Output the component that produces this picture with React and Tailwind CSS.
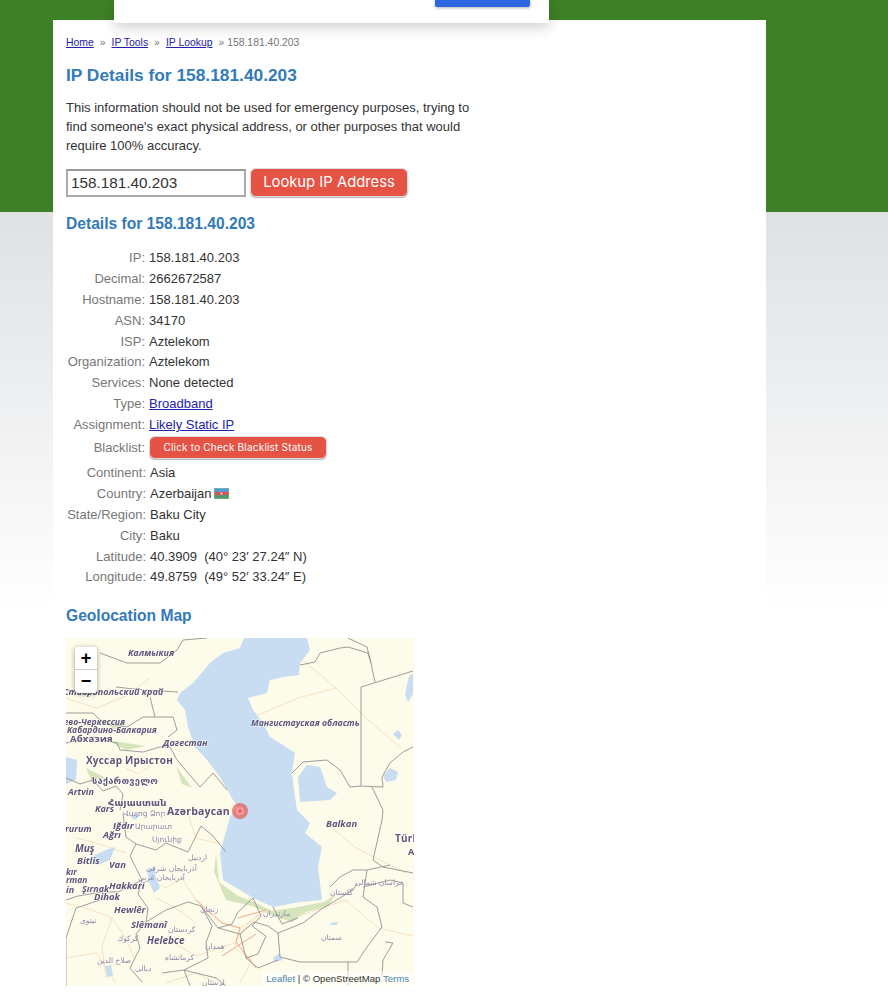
import React from 'react';

const sans = "font-['Liberation_Sans',Arial,sans-serif]";

const firstRows = [
  ['IP', '158.181.40.203'],
  ['Decimal', '2662672587'],
  ['Hostname', '158.181.40.203'],
  ['ASN', '34170'],
  ['ISP', 'Aztelekom'],
  ['Organization', 'Aztelekom'],
  ['Services', 'None detected'],
];

const geoRows = [
  ['Continent', 'Asia'],
  ['Country', 'Azerbaijan'],
  ['State/Region', 'Baku City'],
  ['City', 'Baku'],
  ['Latitude', '40.3909\u00a0\u00a0(40° 23′ 27.24″ N)'],
  ['Longitude', '49.8759\u00a0\u00a0(49° 52′ 33.24″ E)'],
];

// Map labels: text, x, y (baseline), font size
const boldItalic = [
  ['Калмыкия', 62, 18, 9],
  ['Ставропольский край', -3, 57, 9],
  ['Кабардино-Балкария', 1, 95, 8.6],
  ['Дагестан', 97, 108, 9],
  ['Artvin', 2, 157, 9],
  ['Kars', 29, 174, 9],
  ['Мангистауская область', 185, 88, 8.7],
  ['Balkan', 260, 189, 9.5],
  ['rurum', -1, 194, 9],
  ['Iğdır', 47, 191, 9.5],
  ['Ağrı', 37, 200, 9.5],
  ['Muş', 9, 214, 10],
  ['Bitlis', 11, 226, 9.5],
  ['Van', 43, 230, 9.5],
  ['kır', 0, 237, 8.5],
  ['rman', 0, 245, 8.5],
  ['in', 0, 255, 9],
  ['Şırnak', 16, 254, 9],
  ['Hakkari', 43, 251, 9.5],
  ['Dihok', 28, 262, 9.5],
  ['Hewlêr', 48, 275, 9.5],
  ['Slêmanî', 65, 290, 9.5],
  ['Helebce', 81, 306, 10],
];

const boldUpright = [
  ['Абхазия', 4, 104, 9.5],
  ['Хуссар Ирыстон', 20, 126, 10],
  ['საქართველო', 26, 146, 9.3],
  ['Հայաստան', 42, 168, 9.5],
  ['Azərbaycan', 101, 177, 10.5],
  ['Türk', 329, 204, 10],
  ['A', 342, 217, 9],
];

const smallLabels = [
  ['نینوى', 14, 285],
  ['کرکوك', 51, 303],
  ['صلاح الدين', 31, 325],
  ['ديالى', 69, 333],
  ['آذربایجان شرقی', 80, 233],
  ['آذربایجان غربی', 72, 242],
  ['اردبیل', 122, 222],
  ['مازندران', 197, 278],
  ['گلستان', 264, 257],
  ['خراسان شمالی', 289, 247],
  ['سمنان', 255, 302],
  ['زنجان', 134, 274],
  ['كردستان', 102, 294],
  ['كرمانشاه', 99, 322],
  ['همدان', 139, 311],
  ['لرستان', 136, 347],
  ['Վայոց Ձոր', 57, 178],
  ['Արարատ', 69, 191],
  ['Սյունիք', 86, 204],
];

const borders = [
  'M234 27L249 24L254 15L274 10L282 9L302 15L305 25L309 44',
  'M282 0L301 9L305 25',
  'M347 33L295 49V148L317 149L316 139L324 125L337 114L347 109',
  'M226 135L237 124L261 122L274 132L284 149L295 148',
  'M306 149L317 172L316 182L307 222L317 229L347 235',
  'M264 249L274 239L287 232L301 232L324 227',
  'M301 232L297 259L311 269L316 289L301 309L291 324L234 324L214 319L212 295L237 285L254 272L287 252L291 245',
  'M319 304L327 305L317 322L316 339',
  'M282 324V348',
  'M297 249L324 242L337 245L337 265L347 269',
  'M34 15L61 25L94 25L111 12L117 2L141 0',
  'M50 49L77 52L112 54',
  'M84 59L89 79L107 79L111 92L102 99',
  'M0 75L27 75L37 85L61 89L77 79L89 79',
  'M0 105L27 99L51 105L54 112L77 114L94 109L104 109L111 122L134 149L147 135L161 152',
  'M0 140L14 146L27 142L37 153L50 148L57 156L54 172',
  'M57 176L60 199L70 206L64 218L76 242L72 256L82 270L80 284L70 296L74 310L64 330L76 344',
  'M70 206L90 212L100 205L122 214L135 188L146 197L160 214',
  'M0 262L12 258L36 254L52 254L76 242',
  'M0 348V300L10 270L40 260L52 262',
  'M80 284L100 272L122 264L135 268L146 288L140 305L142 320L118 332L124 348',
  'M135 268L152 290L174 296L188 284L202 288L212 295',
  'M174 296L180 320L192 330L212 322',
  'M187 260L195 278L186 288L200 298L192 316L180 320',
  'M207 269L216 286L232 280',
  'M96 335L118 332L150 340L160 348',
  'M152 290L166 286L172 274L187 260',
];

const roads = [
  'M0 265L26 272L46 280L60 300L68 320',
  'M46 280L36 308L40 340',
  'M80 240L100 250L116 240L130 262L156 285L174 290L200 272',
  'M174 290L168 310L186 322L174 345',
  'M200 272L180 288L170 304L190 330',
  'M232 278L280 262L312 290L347 298',
  'M60 130L72 136L84 128',
  'M100 300L130 318L160 308L170 304',
  'M0 60L30 70L60 58L84 40',
  'M184 0L210 0L270 50L232 60L190 78',
  'M270 50L300 80L335 110',
  'M260 185L290 210L340 235',
  'M10 200L30 205L60 215',
  'M90 260L110 270L130 285',
  'M0 320L30 315L50 345',
  'M100 345L130 335L150 345',
  'M120 170L130 200L150 205',
];

function GeoMap() {
  return (
    <div className="relative mt-[11px] w-[348px] h-[348px] overflow-hidden bg-[#fdfbe9]">
      <svg viewBox="0 0 348 348" className="block w-[348px] h-[348px] blur-[0.4px]">
        {/* green strips along the south Caspian and the Caucasus */}
        <g fill="#d6e4bb">
          <path d="M150 216L153 244L172 258L188 264L206 273L232 269L258 264L270 256L262 268L240 274L226 284L210 279L186 268L160 262L148 234Z" />
          <path d="M30 80L60 86L50 92ZM40 102L80 108L60 112ZM110 128L126 150L116 146ZM20 130L40 140L25 142Z" />
        </g>
        {/* roads */}
        <g fill="none" stroke="#f7e0c0" strokeWidth="1">
          {roads.map((d) => <path key={d} d={d} />)}
        </g>
        <path d="M130 262L156 285L174 290L170 304L190 330M172 280L200 272M156 318L190 296" fill="none" stroke="#f0a98c" strokeWidth="1" />
        {/* water */}
        <g fill="#c8ddf2">
          <path d="M178 0L174 10L157 15L144 25L127 45L114 55L111 62L119 72L122 89L129 109L141 122L154 139L167 162L172 169L164 179L154 215L157 242L174 252L187 260L207 269L234 264L256 262L252 229L256 209L239 195L244 185L231 172L228 152L226 135L229 115L217 107L204 99L197 85L187 72L182 60L201 55L204 42L217 39L233 37L234 25L244 12L241 0Z" />
          <path d="M232 139L241 127L254 129L261 149L271 155L264 162L234 164Z" />
          <path d="M0 119L11 122L10 142L0 146Z" />
          <path d="M27 218L40 212L49 209L44 222L32 227L27 224Z" />
          <path d="M81 231L88 229L90 240L94 250L88 255L83 244Z" />
          <path d="M39 328L45 327L47 338L41 339Z" />
          <path d="M339 56L343 38L347 35V56L342 64Z" />
          <path d="M327 96L332 92L336 97L333 102Z" />
          <path d="M317 138L324 130L332 134L330 142L320 144Z" />
          <path d="M264 285L272 284L271 287L265 287Z" />
          <path d="M207 320L213 315L217 322L209 324Z" />
          <path d="M64 178L70 176L74 178L68 182Z" />
        </g>
        {/* borders */}
        <g fill="none" stroke="#929294" strokeWidth="0.9">
          {borders.map((d) => <path key={d} d={d} />)}
        </g>
        {/* place names */}
        <g fill="#5f5578" stroke="#ffffff" strokeOpacity="0.55" strokeWidth="1.5" paintOrder="stroke" fontFamily="'Open Sans','DejaVu Sans',sans-serif">
          {boldItalic.map(([t, x, y, s]) => (
            <text key={t} x={x} y={y} fontSize={s} fontWeight="700" fontStyle="italic">{t}</text>
          ))}
          <text x="59" y="87" fontSize="8.6" fontWeight="700" fontStyle="italic" textAnchor="end">аево-Черкессия</text>
          {boldUpright.map(([t, x, y, s]) => (
            <text key={t} x={x} y={y} fontSize={s} fontWeight="700" letterSpacing="0.2">{t}</text>
          ))}
        </g>
        <g fill="#8d88ac" fontSize="7.5" fontFamily="'DejaVu Sans',sans-serif">
          {smallLabels.map(([t, x, y]) => (
            <text key={t} x={x} y={y}>{t}</text>
          ))}
        </g>
        {/* location marker */}
        <circle cx="174" cy="173" r="8" fill="#e8595a" fillOpacity="0.72" />
        <circle cx="174" cy="173" r="4" fill="#f3a9a2" fillOpacity="0.8" />
        <circle cx="174" cy="173" r="1.8" fill="#e8595a" />
      </svg>
      {/* zoom control */}
      <div className="absolute left-[9px] top-[9px] w-[22px] rounded-[3px] bg-white shadow-[0_1px_5px_rgba(0,0,0,0.4)] text-black font-bold text-[18px] leading-[22px] text-center">
        <div className="h-[23px] border-b border-[#ccc]">+</div>
        <div className="h-[23px]">−</div>
      </div>
      {/* attribution */}
      <div className={`absolute right-0 bottom-0 pl-[4px] pr-[5px] text-[9.6px] leading-[15px] text-[#333] bg-white/60 ${sans}`}>
        <span className="text-[#4a86b0]">Leaflet</span> | © OpenStreetMap <span className="text-[#4a86b0]">Terms</span>
      </div>
    </div>
  );
}

function Flag() {
  return (
    <svg viewBox="0 0 15 11" className="inline-block w-[15px] h-[11px] ml-[3px] align-[-1px]">
      <rect width="15" height="11" fill="#9fb0a8" />
      <rect x="0.5" y="0.5" width="14" height="3.4" fill="#4a9fd0" />
      <rect x="0.5" y="3.8" width="14" height="3.4" fill="#d9505a" />
      <rect x="0.5" y="7.1" width="14" height="3.4" fill="#4f9a68" />
      <circle cx="7.5" cy="5.5" r="1.1" fill="#f3e7e7" />
    </svg>
  );
}

function Row({ label, children, labelWidth }) {
  return (
    <div className="flex h-[20.9px] items-center">
      <div className={`${labelWidth} shrink-0 text-right text-[#777] pr-[4px]`}>{label}:</div>
      <div className="text-[#333] whitespace-nowrap">{children}</div>
    </div>
  );
}

export default function App() {
  return (
    <div className={`relative h-[1000px] overflow-hidden bg-white ${sans}`}>
      {/* page backdrop: green band, then grey fading to white */}
      <div className="absolute inset-x-0 top-0 h-[212px] bg-[#3e8025]" />
      <div className="absolute inset-x-0 top-[212px] h-[400px] bg-gradient-to-b from-[#dfe1e3] to-white" />

      {/* cookie dialog, scrolled mostly out of view */}
      <div className="absolute left-[114px] top-0 z-10 w-[435px] h-[23px] bg-white shadow-[0_4px_14px_rgba(0,0,0,0.2)]">
        <div className="absolute left-[321px] top-0 w-[95px] h-[7px] rounded-b-[2px] bg-[#2c66e0] shadow-[0_1px_3px_rgba(0,0,0,0.3)]" />
      </div>

      <main className="relative ml-[53px] mt-[20px] w-[713px] h-[980px] bg-white px-[13px] pt-[16px]">
        <nav className="text-[10.4px] leading-[14px] h-[14px] text-[#777] whitespace-nowrap">
          <a href="#" className="text-[#2222aa] underline">Home</a>
          <span className="mx-[6px]">»</span>
          <a href="#" className="text-[#2222aa] underline">IP Tools</a>
          <span className="mx-[6px]">»</span>
          <a href="#" className="text-[#2222aa] underline">IP Lookup</a>
          <span className="ml-[6px]">» 158.181.40.203</span>
        </nav>

        <h1 className="mt-[13px] text-[17.33px] leading-[24px] font-bold text-[#337ab7]">IP Details for 158.181.40.203</h1>

        <p className="mt-[11px] w-[420px] text-[13px] leading-[19px] text-[#333]">
          This information should not be used for emergency purposes, trying to find someone's exact physical address, or other purposes that would require 100% accuracy.
        </p>

        <div className="mt-[13px] flex items-center">
          <input
            readOnly
            value="158.181.40.203"
            className="w-[180px] h-[28px] border-2 border-[#aaa] border-t-[#999] px-[3px] text-[15.3px] text-[#333] bg-white outline-none"
          />
          <button className="ml-[4px] w-[158px] h-[29px] rounded-[6px] bg-[#e55344] border border-[#ddd] shadow-[0_1px_1px_rgba(0,0,0,0.3)] text-white text-[14.8px] font-['Inter',sans-serif]">
            Lookup IP Address
          </button>
        </div>

        <h2 className="mt-[16px] text-[15.6px] leading-[22px] font-bold text-[#337ab7]">Details for 158.181.40.203</h2>

        <div className="mt-[12px] text-[13px] leading-[21px]">
          {firstRows.map(([k, v]) => (
            <Row key={k} label={k} labelWidth="w-[83px]">{v}</Row>
          ))}
          <Row label="Type" labelWidth="w-[83px]"><a href="#" className="text-[#2222aa] underline">Broadband</a></Row>
          <Row label="Assignment" labelWidth="w-[83px]"><a href="#" className="text-[#2222aa] underline">Likely Static IP</a></Row>
          <div className="flex h-[25px] items-center">
            <div className="w-[83px] shrink-0 pr-[4px] text-right text-[#777]">Blacklist:</div>
            <button className="w-[178px] h-[23px] rounded-[6px] bg-[#e55344] border border-[#ddd] shadow-[0_1px_1px_rgba(0,0,0,0.3)] text-white text-[10px] tracking-[0.2px] font-['Inter',sans-serif]">
              Click to Check Blacklist Status
            </button>
          </div>
          <div className="h-[2px]" />
          {geoRows.map(([k, v]) => (
            <Row key={k} label={k} labelWidth="w-[84px]">
              {v}
              {k === 'Country' && <Flag />}
            </Row>
          ))}
        </div>

        <h2 className="mt-[18px] text-[15.6px] leading-[22px] font-bold text-[#337ab7]">Geolocation Map</h2>
        <GeoMap />
      </main>
    </div>
  );
}
